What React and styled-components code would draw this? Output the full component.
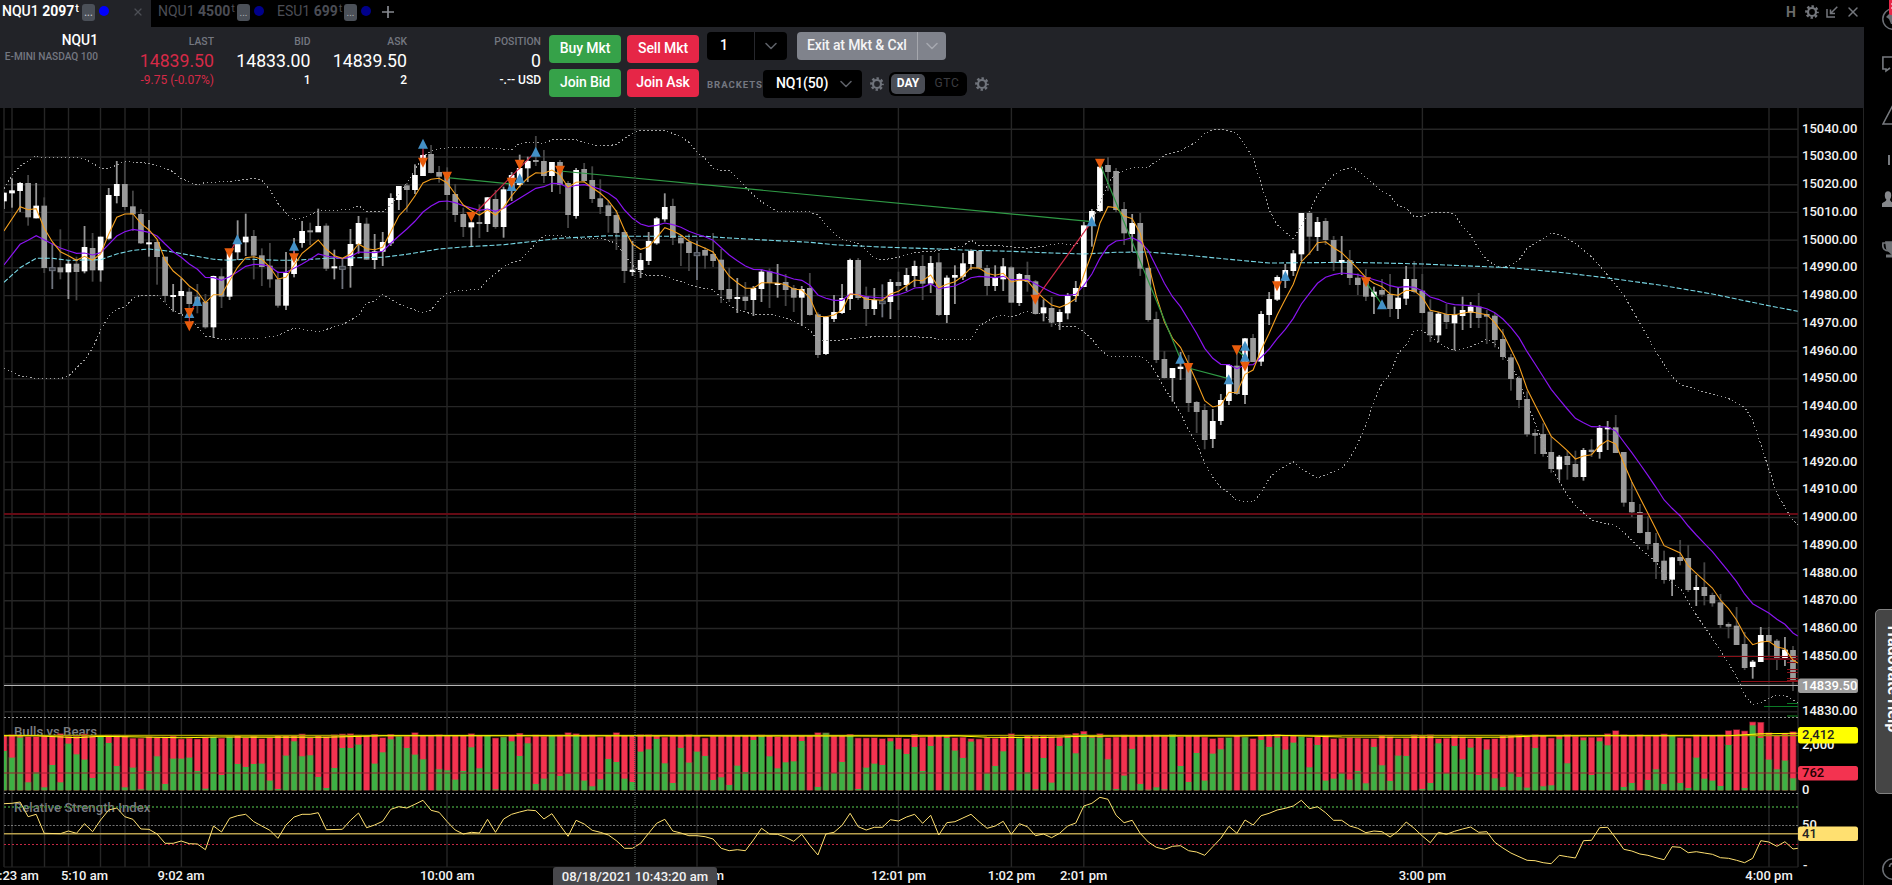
import React from 'react';
import styled, { createGlobalStyle } from 'styled-components';
import { ChevronDown, X } from 'lucide-react';

/* ------------------------------------------------------------------ data */

// Price pane values are thirds of a pixel below the top of the price pane.
// Each candle: wick top, body top, body bottom, wick bottom, kind (w up, g down, d doji)
const CANDLES = `248 248 274 297 w|205 241 250 293 w|216 219 243 306 w|195 219 322 347 g|219 287 325 325 w|262 287 474 489 g|400 473 482 537 d|358 472 487 508 g|450 461 487 567 w|440 461 486 571 g
348 411 484 490 w|369 414 481 515 g|380 380 481 515 w|234 255 386 389 w|153 222 258 280 w|155 222 291 300 g|242 289 313 363 g|297 312 400 402 g|330 397 402 440 w|390 396 441 524 g
440 440 558 577 g|522 555 560 605 w|505 543 558 612 w|533 545 582 600 g|522 560 584 610 g|552 575 652 656 g|497 498 652 684 w|475 499 560 594 g|425 428 560 570 w|331 395 427 450 w
311 380 397 438 w|360 378 437 508 g|415 436 471 528 g|399 467 508 533 g|484 508 587 593 g|426 489 587 600 w|384 442 492 502 w|333 363 399 413 w|338 361 366 405 g|296 348 367 366 w
340 347 476 483 g|419 469 474 508 w|446 469 478 537 d|357 402 468 533 w|318 339 403 431 w|323 341 449 450 g|372 424 450 477 w|366 396 425 468 w|250 264 400 408 w|228 228 270 300 w
219 226 240 306 g|163 195 240 252 w|133 135 198 198 w|105 132 189 190 g|168 186 200 218 g|172 195 255 300 g|222 252 315 336 g|293 312 351 381 g|335 337 352 411 w|283 336 342 384 g
261 262 342 366 w|240 267 351 356 g|230 238 351 383 w|186 195 240 273 w|134 174 225 232 w|140 153 175 216 w|78 150 156 168 g|120 153 198 219 g|156 156 198 246 w|150 156 225 252 g
213 219 315 354 g|174 180 318 326 w|159 177 213 217 g|169 210 267 279 g|208 265 291 312 g|270 286 318 368 g|300 315 369 420 g|360 366 483 519 g|393 479 486 498 w|429 450 480 504 w
366 393 453 465 w|321 325 400 404 w|250 291 328 335 w|266 288 384 405 g|375 383 400 468 g|372 396 429 483 g|392 428 437 510 d|412 420 437 476 g|369 432 453 471 g|417 449 540 579 g
473 537 567 576 g|504 561 567 609 w|516 560 573 600 g|528 534 570 618 w|478 485 537 576 w|475 484 519 594 g|462 519 525 563 w|492 516 540 588 g|525 534 563 606 g|528 537 563 648 w
489 534 615 617 g|607 613 735 744 g|618 621 732 735 w|555 606 627 636 w|522 564 609 612 w|446 450 567 600 w|444 450 564 570 g|530 560 597 648 g|534 570 597 615 w|523 573 581 622 d
507 516 576 627 w|485 516 528 600 g|474 495 525 543 w|452 468 498 531 w|435 468 521 570 g|438 459 521 549 w|429 457 615 618 g|496 503 615 639 w|466 495 503 582 w|429 460 500 510 w
418 423 462 480 w|420 423 475 478 g|465 474 528 557 g|466 504 528 543 w|444 469 508 543 w|468 472 578 579 g|489 492 579 588 w|455 495 516 545 g|510 514 612 614 g|568 592 610 634 w
561 594 638 651 g|598 606 636 660 w|549 558 610 628 w|513 534 558 576 w|336 346 531 531 w|297 303 345 410 w|168 170 303 306 w|141 165 186 243 g|174 183 300 306 g|276 297 370 405 g
312 339 372 426 w|309 339 476 498 g|470 474 630 635 g|605 627 750 759 g|723 747 804 806 g|774 774 804 875 w|726 770 777 810 w|735 768 879 906 g|873 876 906 969 g|882 900 990 1018 g
897 933 987 1014 w|852 870 933 945 w|762 765 873 885 w|725 767 852 855 g|684 685 855 882 w|672 684 756 756 g|603 612 755 768 w|546 567 615 645 w|496 501 569 573 w|462 480 512 534 w
420 430 483 498 w|309 309 433 453 w|303 309 380 435 g|321 336 381 423 w|324 333 390 405 g|378 390 459 483 g|378 450 459 495 w|420 450 504 525 g|490 503 525 555 g|477 507 560 573 g
530 545 560 612 w|507 540 554 560 g|492 552 597 621 g|532 563 597 627 w|468 507 566 585 w|453 507 546 550 g|492 542 609 610 g|568 605 676 696 g|606 611 676 697 w|582 612 636 657 g
590 614 640 721 w|560 600 618 660 w|576 590 608 654 w|549 590 624 654 g|600 612 620 702 g|609 617 690 712 g|657 687 741 750 g|732 742 807 842 g|798 804 870 894 g|844 867 973 980 g
957 969 977 1032 g|940 972 1032 1040 g|980 1026 1077 1088 g|1035 1040 1078 1112 w|1022 1038 1065 1109 g|1022 1062 1101 1103 g|1014 1020 1101 1112 w|987 1019 1026 1041 g|945 954 1026 1046 w|933 952 958 1020 w
915 952 1029 1029 g|1026 1026 1178 1190 g|1116 1176 1207 1221 g|1182 1206 1269 1270 g|1219 1266 1302 1319 g|1269 1299 1356 1407 g|1322 1352 1410 1421 g|1341 1342 1409 1458 w|1290 1341 1353 1366 g|1305 1344 1440 1446 g
1395 1431 1440 1488 w|1357 1431 1458 1486 g|1448 1455 1480 1490 g|1452 1477 1545 1554 g|1537 1542 1550 1585 g|1491 1547 1605 1605 g|1566 1602 1674 1680 g|1650 1655 1671 1706 w|1551 1575 1656 1656 w|1551 1575 1595 1641 g
1587 1592 1647 1680 g|1581 1619 1645 1668 w|1608 1620 1715 1743 g`
  .split(/[|\n]/)
  .map((row) => {
    const [high, top, bottom, low, kind] = row.split(' ');
    return { high: +high, top: +top, bottom: +bottom, low: +low, kind };
  });

// Line series: "candle index:value"
const FAST_MA =
  '0:363 2:290 3:299 4:296 5:355 6:395 7:425 8:437 9:451 10:439 11:450 12:432 13:373 14:322 15:312 16:311 17:340 18:360 19:388 20:450 21:483 22:503 23:528 24:545 25:578 26:554 27:554 28:512 29:472 30:443 31:440 32:448 33:471 34:507 35:502 36:466 37:430 38:410 39:390 40:418 41:437 42:445 43:432 44:402 45:416 46:419 47:412 48:365 49:318 50:292 51:258 52:219 53:208 54:205 55:219 56:252 57:285 58:302 59:315 60:300 61:315 62:292 63:258 64:228 65:204 66:188 67:190 68:180 69:195 70:232 71:217 72:215 73:233 74:250 75:272 76:304 77:360 78:402 79:418 80:410 81:383 82:353 83:362 84:375 85:393 86:404 87:415 88:426 89:465 90:498 91:518 92:535 93:535 94:518 96:519 97:524 98:537 99:540 100:563 101:619 102:620 103:615 104:600 105:552 106:554 107:568 109:571 110:552 111:544 112:527 113:510 114:512 115:495 116:533 117:523 118:515 119:498 120:473 121:474 122:490 123:496 124:490 125:516 126:510 127:512 128:542 129:565 130:585 131:592 132:582 133:566 134:495 135:430 136:340 137:290 138:293 139:318 140:326 141:370 142:460 143:558 144:635 145:685 146:712 147:762 148:815 149:872 150:891 151:885 152:847 153:848 154:793 155:780 156:720 157:670 158:615 159:568 160:523 161:455 162:430 163:398 164:395 165:413 166:428 167:452 168:476 169:503 170:520 171:530 172:552 173:556 174:541 175:542 176:562 177:601 178:606 179:613 180:614 182:605 183:610 184:614 185:638 186:670 187:718 188:768 189:837 190:885 191:932 192:979 193:1000 194:1022 195:1047 196:1038 197:1034 198:1007 199:991 200:1002 201:1060 202:1115 203:1163 204:1210 205:1258 206:1307 207:1318 208:1329 209:1367 210:1390 211:1412 212:1434 213:1470 214:1496 215:1530 216:1575 217:1604 218:1596 219:1594 220:1611 221:1616 222:1650 222.6:1659';
const SLOW_MA =
  '0:465 2:403 3:391 4:377 5:389 6:402 7:414 8:422 9:430 10:429 11:435 12:428 13:403 14:378 15:365 16:358 17:362 18:367 19:378 20:402 21:425 22:442 23:462 24:478 25:502 26:503 27:511 28:500 29:485 30:469 31:463 32:464 33:469 34:487 35:487 36:475 37:462 38:448 39:432 40:438 42:446 43:440 44:426 46:428 47:424 48:400 49:378 50:357 51:334 52:306 53:288 54:275 55:273 56:278 57:287 59:301 60:297 61:304 62:295 63:280 64:265 65:250 66:235 67:230 68:220 69:221 70:233 71:226 72:224 73:230 74:238 75:250 76:267 77:300 78:325 79:342 80:349 81:346 82:339 83:344 84:352 85:364 86:373 87:380 88:391 89:413 90:435 91:452 92:468 93:478 94:479 95:485 96:491 98:507 99:511 100:526 101:555 102:565 103:571 104:571 105:552 106:554 107:560 109:564 110:558 111:554 112:546 113:534 114:532 115:521 116:536 118:528 119:517 120:503 121:499 123:503 124:499 125:509 127:508 128:522 130:547 131:556 132:556 133:553 134:526 135:492 136:445 137:409 138:393 139:390 140:383 141:395 142:422 143:470 144:520 145:560 146:590 147:630 148:670 149:715 150:745 151:763 152:764 153:776 154:765 155:764 156:742 157:717 158:686 159:658 160:625 161:582 162:550 163:520 164:502 165:494 166:489 168:494 169:502 171:516 172:527 173:532 174:530 175:532 176:542 177:561 178:568 179:579 180:584 182:587 183:590 184:596 185:608 186:627 187:652 188:683 189:725 190:762 191:800 192:838 193:868 194:897 195:925 196:938 197:950 199:951 200:963 201:996 202:1028 203:1062 204:1096 205:1132 206:1170 207:1195 208:1218 209:1248 210:1275 211:1300 212:1325 213:1355 214:1384 215:1415 216:1452 217:1481 219:1509 220:1528 221:1543 222:1569 222.6:1578';
const TREND_MA =
  '0:517 2:473 4:445 6:445 8:451 12:449 14:432 16:421 18:417 20:422 23:435 26:448 28:451 30:447 34:451 36:451 40:445 47:442 50:433 54:417 57:411 62:404 65:396 69:385 75:377 78:379 87:379 90:384 95:391 100:397 103:404 108:410 116:417 120:421 125:424 130:429 134:432 138:427 142:426 147:436 152:448 157:459 162:458 167:457 171:459 176:462 181:467 187:473 193.5:488 199.7:506 206:527 212:552 219:587 222.6:604';
const UPPER_BAND =
  '0:236 1:195 2:168 4:137 5:144 8:141 10:146 12:174 13:176 15:154 18:160 19:168 20:175 21:185 22:206 23:215 24:226 25:217 28:215 31:205 32:210 33:240 34:280 35:310 36:330 37:325 39:303 40:302 43:298 44:287 45:304 47:306 48:285 50:219 51:180 52:140 53:123 54:116 55:113 59:112 61:115 63:120 64:100 65:97 67:100 68:90 71:89 72:98 74:108 76:104 77:85 78:70 79:60 82:61 84:80 85:97 86:127 87:145 88:174 89:181 90:180 92:230 93:255 94:275 95:290 96:304 100:306 101:315 102:345 103:370 104:388 106:400 107:420 108:445 109:450 111:442 113:427 115:425 117:418 119:408 120:390 121:406 124:408 127:415 129:409 131:399 133:407 134:365 135:330 136:280 137:220 138:190 140:173 142:171 144.3:132 146:122 148:95 149:70 150:60 151:57 152:62 153:70 154:105 155:145 156:220 157:300 158:345 160:386 161:345 162:305 163:255 164:222 165:195 166:180 167.4:172 168:182 169:202 171:245 172:257 173:287 174:295 175:320 176:320 177:309 179:307 180:313 181:350 182:375 183:418 184:450 185:465 186:473 187:464 188:450 189:415 190:400 191:385 192:370 193:373 195:400 197:440 199:495 201:555 203:640 205:725 207:800 208:823 211:846 214:865 215:880 216:892 217:930 218.7:1055 220:1150 221.8:1225 222.6:1245';
const LOWER_BAND =
  '0:774 2:798 4:805 7:806 8:798 10:750 11:715 12:660 13:618 14:598 15:592 16:565 17:555 19:555 20:580 21:603 22:613 23:625 24:650 25:678 26:682 27:690 29:685 32:684 34:676 36:654 39:665 42:644 44:617 45:580 46:572 47:553 49:582 51:600 52:609 53:600 54:570 55:550 56:543 59:538 60:510 62:470 63:458 64:452 66:400 67:378 69:376 71:384 74:384 76:400 77:435 78:465 79:490 80:497 82:498 84:515 86:530 88:540 90:585 91:600 93:613 95:613 97:623 99:645 100:660 101:692 103:693 105:686 108:680 112:679 115:683 116:689 120:688 121:648 123:620 124:615 125:620 127:605 129:613 130:638 131:649 133:650 134:665 135:688 136:718 137:738 141:738 142:755 143:790 144:835 145:870 146:910 147:960 148:1000 149:1060 150:1102 151:1132 152:1148 153:1172 155:1176 156:1148 157:1105 158:1082 160:1055 161:1078 163:1104 165:1085 166:1075 167:1045 168:1000 169:945 170:875 171:820 172:793 173:730 174:705 175:662 176:661 177:680 178:698 179:712 180:721 182:710 184:688 185:700 186:730 187:765 188:810 189:880 190:940 191:1000 192:1070 193:1115 194:1155 195:1187 197:1230 200:1247 201:1267 203:1315 205:1355 206:1395 207:1420 208:1435 210:1515 212:1585 214:1660 215:1700 216:1755 217:1783 218:1780 219:1765 220:1755 221:1756 222:1770 222.6:1778';

// Indicator panes use the same thirds of a pixel, from the top of the indicator area
const RSI =
  '0:341 1:340 2:336 3:380 4:373 5:430 7:431 8:423 9:430 10:401 11:425 12:390 13:360 14:354 15:380 16:388 17:417 18:418 19:432 20:460 21:460 22:453 23:461 24:462 25:479 26:408 27:426 28:385 29:377 30:373 31:395 32:408 33:421 34:445 35:405 36:381 37:373 38:373 39:368 40:419 42:418 43:391 44:369 45:413 46:405 47:394 48:358 49:350 50:354 51:343 52:331 53:361 54:367 55:395 56:420 57:432 58:427 59:429 60:388 61:427 62:387 63:373 64:366 65:360 66:362 67:387 68:371 69:406 70:439 71:391 72:402 73:421 74:427 75:435 76:452 77:475 78:475 79:460 80:430 81:400 82:388 83:423 84:429 85:437 86:437 87:440 88:447 89:475 90:482 91:479 92:482 93:450 94:415 95:432 96:433 97:442 98:454 99:433 100:466 101:495 102:432 103:427 104:406 105:370 106:410 107:420 108:412 109:412 110:389 111:393 112:381 113:373 114:400 115:376 116:435 117:398 118:395 119:384 120:373 121:395 122:415 123:408 124:394 125:433 126:401 127:410 128:437 129:432 130:443 131:430 132:408 133:399 134:348 135:340 136:322 137:328 138:376 139:398 140:391 141:430 142:456 143:472 144:478 145:469 146:467 147:482 148:486 149:496 150:470 151:445 152:409 153:430 154:390 155:405 156:377 157:370 158:360 159:355 160:348 161:331 162:356 163:350 164:368 165:391 166:391 167:408 168:415 169:428 170:423 171:425 172:441 173:423 174:396 175:415 176:438 177:458 178:427 179:433 180:424 181:417 182:411 183:427 184:425 185:457 186:474 187:489 188:500 189:511 190:512 191:518 192:521 193:496 194:500 195:504 196:452 197:451 198:413 199:412 200:444 201:478 202:483 203:492 204:496 205:503 206:509 207:470 208:472 209:488 210:485 211:489 212:493 213:503 214:505 215:511 216:518 217:505 218:452 219:456 220:469 221:455 222:477 222.6:475';
const BULL_BEAR_AVERAGE =
  '0:137 4:137 9:143 12:139 22:143 27:141 40:142 47:137 58:137 106:138 113:139 118:137 122:142 128:143 134:139 142:138 153:138 158:136 166:141 175:142 186:142 190:138 198:137 214:137 218:131 222.6:130';
// Bear top and bull top of every stacked bar
const BARS =
  '138,183 135,203 137,143 141,277 141,247 137,292 140,225 132,277 140,161 140,193 133,209 140,264 140,140 136,159 136,228 139,292 146,233 146,298 141,243 143,199 142,282 139,206 148,206 146,203 148,243 143,296 142,142 146,255 142,142 138,222 144,231 140,222 147,221 144,272 138,297 138,197 138,154 133,199 144,196 137,261 141,294 135,234 133,174 132,174 136,164 138,301 134,221 144,187 134,148 140,140 139,174 129,194 138,208 138,301 135,238 137,241 138,269 138,243 132,172 138,235 138,138 145,298 142,142 136,154 131,198 142,160 136,282 140,266 138,138 136,258 129,251 132,137 137,272 136,289 142,268 138,207 129,216 137,266 138,276 135,185 135,178 137,147 142,220 139,279 137,174 135,218 139,185 145,198 139,270 139,262 138,285 138,227 138,246 138,150 136,140 138,199 141,235 139,217 139,214 138,153 138,301 129,291 130,130 139,249 138,216 134,138 145,297 145,233 144,221 147,225 145,154 144,178 147,192 134,171 143,243 137,168 138,301 137,144 144,182 143,204 147,155 148,301 144,250 146,228 141,184 132,301 146,146 138,247 139,298 139,204 141,278 142,168 135,144 131,190 125,132 138,143 132,143 144,208 142,297 136,257 139,177 138,282 138,299 136,292 140,298 135,135 141,228 139,276 139,189 142,272 147,191 144,178 144,144 138,301 142,142 147,301 138,150 138,171 135,143 139,179 138,158 141,141 144,232 141,165 138,272 147,266 146,250 144,269 145,243 147,280 147,171 138,226 141,273 147,197 146,198 135,301 139,297 135,279 147,160 146,250 140,168 142,208 147,173 143,255 149,179 147,265 137,291 137,247 135,261 140,293 135,174 137,289 145,286 138,148 135,220 140,301 143,151 143,255 143,154 132,166 123,301 135,291 138,279 135,301 139,270 137,238 133,282 138,138 144,279 145,294 136,203 139,266 138,272 136,288 123,165 120,301 124,294 97,106 98,144 129,209 137,238 131,212 126,265'
    .split(' ')
    .map((pair) => pair.split(',').map(Number));

const ENTRIES = [[712, 388], [592, 573], [568, 609], [882, 407], [1269, 101], [1607, 125], [1559, 205], [1535, 228], [3275, 334], [3541, 746], [3686, 808], [3735, 740], [3735, 707], [3856, 497], [4146, 583]];
const EXITS = [[688, 430], [568, 609], [568, 649], [882, 445], [1269, 158], [1341, 200], [1414, 321], [1535, 218], [1559, 164], [1680, 182], [3106, 569], [3300, 161], [3565, 774], [3710, 721], [3735, 770], [3831, 529], [4098, 517]];
const WINS = [[1341, 203, 1535, 222], [1680, 183, 3275, 335], [3300, 161, 3541, 746], [3565, 774, 3686, 806], [3710, 721, 3735, 740], [4098, 517, 4146, 583]];
const LOSSES = [[1414, 321, 1607, 125], [3106, 569, 3275, 335], [568, 609, 568, 649], [568, 609, 592, 573], [688, 430, 712, 388], [882, 407, 882, 445], [1269, 101, 1269, 158], [3735, 707, 3735, 770]];

const VERTICALS = [12, 44.5, 68.5, 100.5, 125, 149, 181.4, 447, 697, 898.4, 1011.4, 1083.8, 1422.4, 1769];
const TIMES = [['5:10 am', 84.5], ['9:02 am', 181], ['10:00 am', 447.2], ['12:01 pm', 898.7], ['1:02 pm', 1011.5], ['2:01 pm', 1083.7], ['3:00 pm', 1422.4], ['4:00 pm', 1769]];
const PRICES = Array.from({ length: 22 }, (_, i) => 15040 - i * 10);

const PLOT_LEFT = 4;
const PLOT_RIGHT = 1798;
const slotX = (i) => 12 + (i - 1) * 8.0588;
const priceY = (v) => 110 + v / 3;
const studyY = (v) => 690 + v / 3;
const line = (series, toY) =>
  series
    .split(' ')
    .map((p) => p.split(':').map(Number))
    .map(([i, v]) => `${Math.max(PLOT_LEFT, slotX(i)).toFixed(1)},${toY(v).toFixed(1)}`)
    .join(' ');

/* ---------------------------------------------------------------- styles */

const GlobalStyle = createGlobalStyle`
  *, *::before, *::after { box-sizing: border-box; }
  html, body { margin: 0; background: #000; overflow: hidden; }
  body { font-family: Roboto, "Liberation Sans", sans-serif; color: #fff; }
`;

const Screen = styled.div`
  display: flex;
  width: 1892px;
  height: 885px;
  overflow: hidden;
  background: #000;
`;
const Workspace = styled.main`
  display: flex;
  flex-direction: column;
  flex: 0 0 1864px;
`;
const TabStrip = styled.header`
  display: flex;
  height: 27px;
  background: #000;
`;
const Tab = styled.div`
  display: flex;
  align-items: flex-start;
  flex: none;
  width: ${(p) => p.$width}px;
  padding: 3px 0 0 ${(p) => p.$inset}px;
  font-size: 14px;
  line-height: 17px;
  white-space: nowrap;
  color: ${(p) => (p.$active ? '#fff' : '#4b4d55')};
  background: ${(p) => (p.$active ? '#222328' : 'transparent')};
  font-weight: ${(p) => (p.$active ? 500 : 400)};
`;
const TabTitle = styled.span`
  flex: none;
  width: ${(p) => p.$width}px;
  b { font-weight: 700; }
  sup { font-size: 11px; line-height: 0; margin-left: 1px; vertical-align: 4px; }
`;
const TabBadge = styled.span`
  flex: none;
  width: 13px;
  height: 17px;
  margin-top: 1px;
  border-radius: 3px;
  background: #4b5058;
  color: ${(p) => (p.$active ? '#c3c6cc' : '#b0b3b8')};
  font-size: 10px;
  line-height: 18px;
  text-align: center;
`;
const LinkDot = styled.span`
  flex: none;
  width: 10px;
  height: 10px;
  margin: 3px 0 0 4px;
  border-radius: 50%;
  background: ${(p) => (p.$active ? '#0000ff' : '#00008b')};
`;
const TabClose = styled.span`
  display: flex;
  margin: 3px 0 0 23px;
  color: #4d4f55;
`;
const AddTab = styled.span`
  display: flex;
  margin: 6px 0 0 5px;
`;
const WindowTools = styled.div`
  display: flex;
  align-items: center;
  gap: 7px;
  height: 24px;
  margin-left: auto;
  padding-right: 3px;
  color: #74777d;
`;
const HelpLetter = styled.span`
  margin-right: 2px;
  font-size: 14px;
  line-height: 22px;
  font-weight: 700;
  color: #6b6b6b;
`;
const TradeBar = styled.section`
  display: flex;
  height: 81px;
  background: #222328;
`;
const Quote = styled.div`
  display: flex;
  flex-direction: column;
  align-items: flex-end;
  flex: none;
  width: ${(p) => p.$width}px;
  padding-top: 8px;
  white-space: nowrap;
  color: ${(p) => (p.$down ? '#d52a47' : '#fff')};
`;
const QuoteLabel = styled.span`
  font-size: 10.4px;
  font-weight: 500;
  line-height: 13px;
  color: #747780;
`;
const QuoteValue = styled.span`
  font-size: 17.7px;
  line-height: 24px;
  margin-top: 1px;
`;
const QuoteSub = styled.span`
  font-size: 12px;
  line-height: 14px;
  font-weight: ${(p) => (p.$strong ? 500 : 400)};
`;
const Instrument = styled.span`
  font-size: 13.8px;
  font-weight: 500;
  line-height: 11px;
`;
const InstrumentName = styled.span`
  margin-top: 4px;
  font-size: 10.1px;
  font-weight: 500;
  line-height: 13px;
  color: #747780;
`;
const OrderButtons = styled.div`
  display: grid;
  grid-template-columns: 72px 72px;
  grid-auto-rows: 28px;
  gap: 6px;
  padding-top: 8px;
  margin-left: 8px;
`;
const OrderButton = styled.button`
  padding: 0 0 2px;
  border: 0;
  border-radius: 4px;
  background: ${(p) => (p.$side === 'buy' ? '#36a249' : '#e62647')};
  color: #fff;
  font: 500 14px Roboto, sans-serif;
  letter-spacing: -0.1px;
  white-space: nowrap;
`;
const OrderOptions = styled.div`
  display: flex;
  flex-direction: column;
  gap: 10px;
  padding-top: 5px;
  margin-left: 8px;
`;
const OptionRow = styled.div`
  display: flex;
  align-items: center;
  height: 28px;
`;
const SplitBox = styled.div`
  display: flex;
  height: 28px;
  width: ${(p) => p.$width}px;
  margin-right: ${(p) => p.$after || 0}px;
  border-radius: 4px;
  background: ${(p) => (p.$light ? '#80838c' : '#000')};
  color: ${(p) => (p.$light ? '#f4f4f5' : '#fff')};
  font-size: 14px;
  font-weight: 500;
  line-height: 27px;
  white-space: nowrap;
  letter-spacing: -0.15px;
`;
const SplitText = styled.span`
  flex: 1;
  padding-left: ${(p) => p.$inset}px;
`;
const SplitArrow = styled.span`
  display: flex;
  align-items: center;
  justify-content: center;
  width: ${(p) => p.$width}px;
  border-left: ${(p) => (p.$divider ? `1px solid ${p.$divider}` : '0')};
  color: ${(p) => p.$color};
`;
const BracketsLabel = styled.span`
  width: 56px;
  padding-top: 1px;
  font-size: 9.6px;
  font-weight: 700;
  letter-spacing: 0.95px;
  color: #747780;
`;
const GearSlot = styled.span`
  display: flex;
  margin-left: ${(p) => p.$before}px;
  color: #70747c;
`;
const TifToggle = styled.div`
  display: flex;
  width: 78px;
  height: 24px;
  margin-left: 5px;
  padding: 2px;
  border-radius: 6px;
  background: #000;
`;
const TifOption = styled.span`
  flex: ${(p) => (p.$on ? '0 0 34px' : '1')};
  padding-left: ${(p) => (p.$on ? 0 : 4)}px;
  border-radius: 5px;
  background: ${(p) => (p.$on ? '#494c54' : 'transparent')};
  color: ${(p) => (p.$on ? '#fff' : '#3c3d41')};
  font-size: 12px;
  font-weight: ${(p) => (p.$on ? 700 : 400)};
  letter-spacing: ${(p) => (p.$on ? 0 : '0.7px')};
  line-height: 19px;
  text-align: center;
`;
const ChartArea = styled.section`
  height: 777px;
  border-right: 1px solid #242424;
`;
const ChartSvg = styled.svg`
  display: block;
  font: 500 13px Roboto, sans-serif;
`;
const Rail = styled.aside`
  display: flex;
  flex-direction: column;
  align-items: flex-start;
  flex: 0 0 28px;
  overflow: hidden;
  background: #000;
`;
const RailIcon = styled.svg`
  flex: none;
  margin-top: ${(p) => p.$before}px;
  margin-left: 18px;
`;
const HelpTab = styled.div`
  flex: none;
  width: 60px;
  height: 185px;
  margin: 350px 0 0 11px;
  padding: 13px 31px 0 0;
  border: 1px solid #828282;
  border-radius: 5px;
  background: #454545;
  color: #fff;
  font-size: 16px;
  font-weight: 700;
  line-height: 20px;
  writing-mode: vertical-rl;
  white-space: nowrap;
`;

/* ------------------------------------------------------------ components */

const Gear = ({ size = 14 }) => (
  <svg width={size} height={size} viewBox="0 0 14 14" fill="none" stroke="currentColor">
    <circle cx="7" cy="7" r="4" strokeWidth="2.2" />
    <circle cx="7" cy="7" r="5.7" strokeWidth="2.3" strokeDasharray="2.4 2.076" strokeDashoffset="1.2" />
  </svg>
);

const Collapse = () => (
  <svg width="12" height="12" viewBox="0 0 12 12" fill="none" stroke="currentColor" strokeWidth="1.5">
    <path d="M1 3V11H9M11.3.7L4.5 7.5M4.5 3.5V7.5H9" />
  </svg>
);

function TabItem({ symbol, size, active, width, inset, titleWidth }) {
  return (
    <Tab $active={active} $width={width} $inset={inset}>
      <TabTitle $width={titleWidth}>
        {symbol} <b>{size}</b>
        <sup>t</sup>
      </TabTitle>
      <TabBadge $active={active}>...</TabBadge>
      <LinkDot $active={active} />
      {active && (
        <TabClose>
          <X size={12} strokeWidth={2.4} />
        </TabClose>
      )}
    </Tab>
  );
}

function QuoteColumn({ label, value, sub, width, down }) {
  return (
    <Quote $width={width} $down={down}>
      <QuoteLabel>{label}</QuoteLabel>
      <QuoteValue>{value}</QuoteValue>
      <QuoteSub $strong={!down}>{sub}</QuoteSub>
    </Quote>
  );
}

const HLine = ({ y, x = PLOT_LEFT, color, width = 1, dash }) => (
  <line x1={x} x2={PLOT_RIGHT} y1={y} y2={y} stroke={color} strokeWidth={width} strokeDasharray={dash} />
);

function Grid() {
  return (
    <g>
      {[...VERTICALS, PLOT_LEFT, PLOT_RIGHT].map((x) => (
        <line key={x} x1={x} x2={x} y1="108" y2="867" stroke="#262626" strokeWidth="1.4" />
      ))}
      {PRICES.map((p, i) => (
        <HLine key={p} y={129.2 + i * 27.74} color="#262626" width={1.4} />
      ))}
      <HLine y={745} color="#222" />
      <HLine y={867} color="#222" />
    </g>
  );
}

const BODY = { w: '#ffffff', g: '#9a9a9a', d: '#3c4149' };
const WICK = { w: '#969696', g: '#444444', d: '#6c717b' };

function Candles() {
  return (
    <g>
      {CANDLES.map((c, i) => {
        const x = slotX(i);
        const h = Math.max(2, (c.bottom - c.top) / 3);
        return (
          <g key={i}>
            <rect x={x - 0.9} y={priceY(c.high)} width="1.8" height={(c.low - c.high) / 3} fill={WICK[c.kind]} />
            <rect
              x={x - 2.85}
              y={priceY(c.top)}
              width="5.7"
              height={h}
              fill={BODY[c.kind]}
              stroke={c.kind === 'd' ? '#6c717b' : 'none'}
            />
          </g>
        );
      })}
    </g>
  );
}

function BullBears() {
  return (
    <g>
      {BARS.map(([bear, bull], i) => {
        const x = slotX(i);
        return (
          <g key={i}>
            <rect x={x - 3.5} width="7" y={studyY(bear - 2)} height={(303 - bear) / 3} fill="#7a1829" />
            <rect x={x - 3.5} width="7" y={studyY(bull - 2)} height={(303 - bull) / 3} fill="#1f5922" />
            <rect x={x - 2.7} width="5.4" y={studyY(bear)} height={(301 - bear) / 3} fill="#f33350" />
            <rect x={x - 2.7} width="5.4" y={studyY(bull)} height={(301 - bull) / 3} fill="#3eb144" />
          </g>
        );
      })}
    </g>
  );
}

function Trades() {
  return (
    <g>
      {WINS.map((t, i) => (
        <line key={i} x1={t[0] / 3} y1={priceY(t[1])} x2={t[2] / 3} y2={priceY(t[3])} stroke="#2f9a45" strokeWidth="1.2" />
      ))}
      {LOSSES.map((t, i) => (
        <line key={i} x1={t[0] / 3} y1={priceY(t[1])} x2={t[2] / 3} y2={priceY(t[3])} stroke="#d32b48" strokeWidth="1.2" />
      ))}
      {ENTRIES.map(([x, y], i) => (
        <path key={i} d={`M${x / 3} ${priceY(y) - 5}l5 10h-10z`} fill="#4390c6" />
      ))}
      {EXITS.map(([x, y], i) => (
        <path key={i} d={`M${x / 3} ${priceY(y) + 5}l5 -10h-10z`} fill="#e85c0c" />
      ))}
    </g>
  );
}

function Levels() {
  return (
    <g shapeRendering="crispEdges">
      <HLine y={514} color="#650a14" width={2} />
      <HLine y={656.5} x={1718} color="#8a1018" />
      <HLine y={659.2} x={1764} color="#650a14" width={2} />
      <HLine y={681.5} x={1741} color="#8a1018" />
      {[662.5, 669.5, 672.5, 678.5, 680].map((y) => (
        <HLine key={y} y={y} x={1787} color="#8a1018" />
      ))}
      <HLine y={703.5} x={1787} color="#0b7a26" />
      <HLine y={706.5} x={1764} color="#0b7a26" />
      <HLine y={716} x={1787} color="#07420f" width={2} />
      <HLine y={685.5} color="#b4b4b4" />
    </g>
  );
}

const Tag = ({ y, h, fill, color, children }) => (
  <g>
    <rect x={PLOT_RIGHT} y={y} width="60" height={h} rx="2.5" fill={fill} />
    <text x="1802" y={y + h / 2 + 4} fill={color}>
      {children}
    </text>
  </g>
);

function Chart() {
  return (
    <ChartArea>
      <ChartSvg width="1863" height="777" viewBox="0 108 1863 777">
        <defs>
          <clipPath id="plot">
            <rect x={PLOT_LEFT} y="108" width={PLOT_RIGHT - PLOT_LEFT} height="760" />
          </clipPath>
        </defs>
        <Grid />
        <g clipPath="url(#plot)" fill="none">
          <HLine y={717.5} color="#999" dash="2 2" />
          <HLine y={793.5} color="#999" dash="2 2" />
          <g fill="#7b7d82" fontWeight="500" fontSize="13.2">
            <text x="14" y="736">Bulls vs Bears</text>
            <text x="14" y="812">Relative Strength Index</text>
          </g>
          <BullBears />
          <HLine y={773} color="#9c1c31" width={1} />
          <HLine y={735.5} color="#a8a000" width={1.4} />
          <polyline points={line(BULL_BEAR_AVERAGE, studyY)} stroke="#ffff00" strokeWidth="1.1" />
          <g opacity="0.75">
            <HLine y={807} color="#3d8b37" width={2} dash="2 2" />
            <HLine y={825.5} color="#999" dash="2 1.5" />
          </g>
          <HLine y={833.8} color="#b79f4d" width={1.4} />
          <HLine y={844.5} color="#c42743" dash="2 2" />
          <polyline points={line(RSI, studyY)} stroke="#ffe070" strokeWidth="1" />

          <Candles />
          <Levels />
          <g shapeRendering="crispEdges">
            <polyline points={line(UPPER_BAND, priceY)} stroke="#a0a0a0" strokeDasharray="1.5 2.5" />
            <polyline points={line(LOWER_BAND, priceY)} stroke="#a0a0a0" strokeDasharray="1.5 2.5" />
          </g>
          <polyline points={line(TREND_MA, priceY)} stroke="#78d8e6" strokeWidth="1.1" strokeDasharray="5 2" />
          <polyline points={line(SLOW_MA, priceY)} stroke="#8a14f0" strokeWidth="1.2" />
          <polyline points={line(FAST_MA, priceY)} stroke="#f5a01f" strokeWidth="1.1" />
          <Trades />
          <line x1="635" x2="635" y1="108" y2="867" stroke="#444a47" strokeDasharray="1 1" strokeWidth="1.5" />
        </g>

        <g fill="#f2f2f2">
          {PRICES.map((p, i) =>
            p === 14840 ? null : (
              <text key={p} x="1802" y={132.7 + i * 27.74}>
                {p}.00
              </text>
            ),
          )}
          <text x="1802" y="748.5">2,000</text>
          <text x="1802" y="794">0</text>
          <text x="1802" y="829">50</text>
          <text x="1803" y="870">-</text>
          <text x="-1" y="880">:23 am</text>
          {TIMES.map(([t, x]) => (
            <text key={t} x={x} y="880" textAnchor="middle">
              {t}
            </text>
          ))}
          <text x="724" y="880" textAnchor="end">am</text>
        </g>
        <Tag y={678.5} h={14.5} fill="#9c9c9c" color="#fff">14839.50</Tag>
        <Tag y={727} h={16.5} fill="#ffff00" color="#222">2,412</Tag>
        <Tag y={766} h={14.5} fill="#f33350" color="#200">762</Tag>
        <Tag y={826.5} h={14.5} fill="#ffe070" color="#222">41</Tag>
        <rect x="553" y="867" width="164" height="21" rx="3" fill="#48484c" />
        <text x="635" y="881" textAnchor="middle" fill="#f2f2f2" fontSize="13.1">08/18/2021 10:43:20 am</text>
      </ChartSvg>
    </ChartArea>
  );
}

function SideRail() {
  return (
    <Rail>
      <RailIcon $before={0} width="30" height="32" viewBox="0 0 30 32">
        <circle cx="11" cy="19" r="10.2" fill="none" stroke="#6b6f75" strokeWidth="1.5" />
        <path d="M4 17L8 13L13 14V24H9L7 19Z" fill="#6b6f75" />
        <rect x="7" y="-4" width="20" height="19" rx="2" fill="#e62647" />
        <path d="M9 4h3M9 8h3" stroke="#fff" />
      </RailIcon>
      <RailIcon $before={23} width="30" height="18" viewBox="0 0 30 18" fill="none" stroke="#777a7f" strokeWidth="1.6">
        <path d="M22 2H.9V14H4V16L8 13" />
      </RailIcon>
      <RailIcon $before={31} width="30" height="22" viewBox="0 0 30 22" fill="none" stroke="#777a7f" strokeWidth="1.6">
        <path d="M11 1L1 20H22Z" />
      </RailIcon>
      <RailIcon $before={29} width="30" height="10" viewBox="0 0 30 10">
        <rect x="6" width="2" height="10" fill="#777a7f" />
      </RailIcon>
      <RailIcon $before={26} width="30" height="17" viewBox="0 0 30 17" fill="#85878b">
        <ellipse cx="6" cy="4.5" rx="3.2" ry="4.2" />
        <path d="M-1 16C-1 10 4 12 4.5 8H8C8 12 12 10 12 16Z" />
      </RailIcon>
      <RailIcon $before={33} width="30" height="18" viewBox="0 0 30 18" fill="none" stroke="#6f7276" strokeWidth="1.7">
        <path d="M4 2H1C0 8 3 10 7 10" />
        <path d="M4 1H16V8L10 13L5 8Z" fill="#6f7276" />
        <path d="M4 15H18" strokeWidth="3" />
      </RailIcon>
      <HelpTab>Tradovate Help</HelpTab>
      <RailIcon $before={64} width="30" height="24" viewBox="0 0 30 24" fill="none" stroke="#6b6f75">
        <circle cx="11" cy="11" r="10.2" strokeWidth="1.5" />
        <path d="M7.5 9C7.5 4 14 5 14 9C14 12 11 11 11 15" strokeWidth="1.7" />
      </RailIcon>
    </Rail>
  );
}

export default function App() {
  return (
    <>
      <GlobalStyle />
      <Screen>
        <Workspace>
          <TabStrip>
            <TabItem symbol="NQU1" size="2097" active width={151} inset={2} titleWidth={80} />
            <TabItem symbol="NQU1" size="4500" width={119} inset={7} titleWidth={79} />
            <TabItem symbol="ESU1" size="699" width={107} inset={7} titleWidth={67} />
            <AddTab>
              <svg width="12" height="12" viewBox="0 0 12 12" stroke="#868990" strokeWidth="1.7">
                <path d="M6 0V12M0 6H12" />
              </svg>
            </AddTab>
            <WindowTools>
              <HelpLetter>H</HelpLetter>
              <Gear size={14} />
              <Collapse />
              <X size={16} strokeWidth={2.2} />
            </WindowTools>
          </TabStrip>

          <TradeBar>
            <Quote $width={98}>
              <Instrument>NQU1</Instrument>
              <InstrumentName>E-MINI NASDAQ 100</InstrumentName>
            </Quote>
            <QuoteColumn label="LAST" value="14839.50" sub="-9.75 (-0.07%)" width={116} down />
            <QuoteColumn label="BID" value="14833.00" sub="1" width={96.5} />
            <QuoteColumn label="ASK" value="14839.50" sub="2" width={96.5} />
            <QuoteColumn label="POSITION" value="0" sub="-.-- USD" width={134} />
            <OrderButtons>
              <OrderButton $side="buy">Buy Mkt</OrderButton>
              <OrderButton $side="sell">Sell Mkt</OrderButton>
              <OrderButton $side="buy">Join Bid</OrderButton>
              <OrderButton $side="sell">Join Ask</OrderButton>
            </OrderButtons>
            <OrderOptions>
              <OptionRow>
                <SplitBox $width={80} $after={10}>
                  <SplitText $inset={13}>1</SplitText>
                  <SplitArrow $width={33} $divider="#26272c" $color="#5d6067">
                    <ChevronDown size={20} strokeWidth={1.9} />
                  </SplitArrow>
                </SplitBox>
                <SplitBox $width={149} $light>
                  <SplitText $inset={10}>Exit at Mkt &amp; Cxl</SplitText>
                  <SplitArrow $width={29} $divider="#a5a7ad" $color="#a5a8af">
                    <ChevronDown size={20} strokeWidth={1.9} />
                  </SplitArrow>
                </SplitBox>
              </OptionRow>
              <OptionRow>
                <BracketsLabel>BRACKETS</BracketsLabel>
                <SplitBox $width={99}>
                  <SplitText $inset={13}>NQ1(50)</SplitText>
                  <SplitArrow $width={32} $color="#5d6067">
                    <ChevronDown size={20} strokeWidth={1.9} />
                  </SplitArrow>
                </SplitBox>
                <GearSlot $before={8}>
                  <Gear size={14} />
                </GearSlot>
                <TifToggle>
                  <TifOption $on>DAY</TifOption>
                  <TifOption>GTC</TifOption>
                </TifToggle>
                <GearSlot $before={8}>
                  <Gear size={14} />
                </GearSlot>
              </OptionRow>
            </OrderOptions>
          </TradeBar>

          <Chart />
        </Workspace>
        <SideRail />
      </Screen>
    </>
  );
}
